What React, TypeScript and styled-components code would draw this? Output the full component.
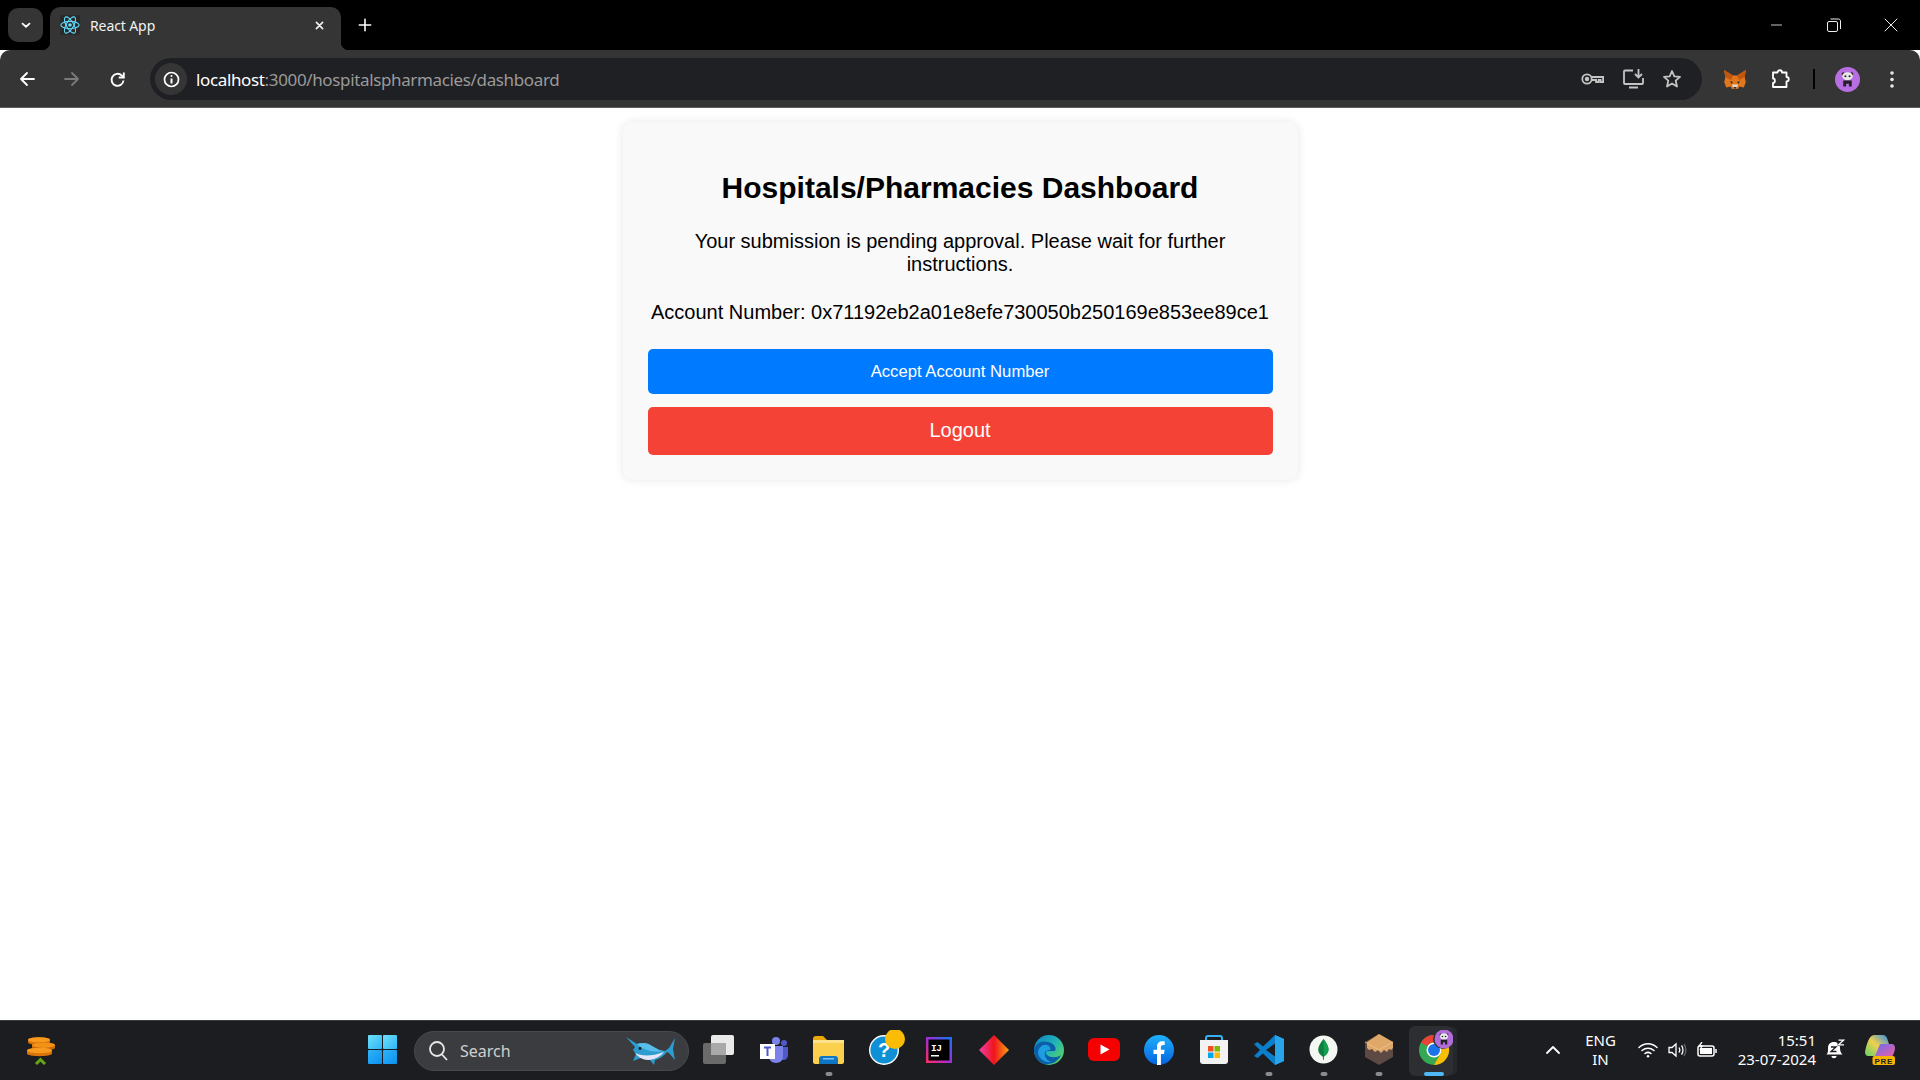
import React from "react";
import styled, { createGlobalStyle } from "styled-components";

const Global = createGlobalStyle`
  html, body { margin: 0; padding: 0; height: 100%; background: #fff; }
  #root { height: 100%; }
  * { box-sizing: border-box; }
`;

const Screen = styled.div`
  display: flex; flex-direction: column; width: 100%; height: 100vh; overflow: hidden;
  font-family: "Liberation Sans", Arial, sans-serif;
`;
const TabStrip = styled.div`
  display: flex; align-items: flex-end; height: 50px; flex: none; background: #000; padding-left: 8px;
`;
const TabMenu = styled.div`
  width: 35px; height: 34px; margin-bottom: 8px; margin-right: 7px; border-radius: 10px; background: #353535;
  display: flex; align-items: center; justify-content: center;
`;
const Tab = styled.div`
  position: relative; display: flex; align-items: center; width: 291px; height: 43px; background: #353535;
  border-radius: 10px 10px 0 0; padding: 0 16px 7px 10px; color: #fff;
  &::before, &::after { content: ""; position: absolute; bottom: 0; width: 8px; height: 8px; }
  &::before { left: -8px; background: radial-gradient(circle at 0 0, #000 8px, #353535 8.5px); }
  &::after { right: -8px; background: radial-gradient(circle at 100% 0, #000 8px, #353535 8.5px); }
`;
const Favicon = styled.div`
  width: 20px; height: 20px; background: #2a2a2a; border-radius: 2px; margin-right: 10px; flex: none;
  display: flex; align-items: center; justify-content: center;
`;
const TabTitle = styled.span`
  flex: 1; font: 14px "Noto Sans", sans-serif; color: #f1f1f1; letter-spacing: -0.1px;
`;
const NewTab = styled.div`
  width: 30px; height: 30px; margin: 0 0 10px 9px; display: flex; align-items: center; justify-content: center;
`;
const StripSpacer = styled.div`flex: 1;`;
const WindowControls = styled.div`
  display: flex; align-self: stretch; align-items: center; padding: 0 1px 0 0; margin-bottom: 1px;
`;
const WindowButton = styled.div`
  width: 56.5px; height: 48px; display: flex; align-items: center; justify-content: center;
`;

const Toolbar = styled.div`
  display: flex; align-items: center; height: 58px; flex: none; background: #353535; border-bottom: 1px solid #5c5c5c;
  border-radius: 10px 10px 0 0; padding: 1px 6px 0 4px;
`;
const ToolSlot = styled.div<{ $w: number }>`
  width: ${(p) => p.$w}px; height: 40px; flex: none; display: flex; align-items: center; justify-content: center;
`;
const AddressBar = styled.div`
  flex: 1; height: 42px; margin: 0 10px 0 10px; background: #1f2023; border-radius: 21px; display: flex; align-items: center;
  padding: 0 4px 0 5px;
`;
const InfoChip = styled.div`
  width: 32px; height: 32px; border-radius: 50%; background: #353535; display: flex; align-items: center; justify-content: center; margin-right: 9px;
`;
const Url = styled.div`
  flex: 1; font: 17px "Noto Sans", sans-serif; color: #9a9a9a; letter-spacing: -0.36px;
  b { font-weight: 400; color: #fff; }
`;
const ToolDivider = styled.div`
  width: 2px; height: 20px; background: #000; margin: 0 9px 0 9px; flex: none;
`;
const Avatar = styled.div`
  width: 25px; height: 25px; border-radius: 50%; background: #b76ee0; display: flex; align-items: center; justify-content: center;
`;

const Main = styled.main`
  flex: 1; min-height: 0; background: #fff; padding-top: 14px; display: flex; justify-content: center; align-items: flex-start;
`;
const Card = styled.section`
  width: 675px; padding: 25px; background: #f9f9f9; border-radius: 10px; box-shadow: 0 0 10px rgba(0, 0, 0, 0.1);
  text-align: center; color: #000;
`;
const Title = styled.h2`
  margin: 22px 0 24px; font-size: 30px; line-height: 37px; font-weight: 700;
`;
const Message = styled.p`
  margin: 0 0 25px; font-size: 20px; line-height: 23px;
`;
const ActionButton = styled.button<{ $bg: string; $size: number; $h: number; $lift?: number }>`
  display: block; width: 100%; height: ${(p) => p.$h}px; border: 0; border-radius: 5px; background: ${(p) => p.$bg}; color: #fff;
  font-family: "Liberation Sans", Arial, sans-serif; font-size: ${(p) => p.$size}px; margin-bottom: 13px;
  padding: 0 0 ${(p) => p.$lift ?? 0}px;
  &:last-child { margin-bottom: 0; }
`;

const Taskbar = styled.footer`
  display: grid; grid-template-columns: 355px auto 1fr; align-items: center; height: 60px; flex: none;
  background: #1c1d20; border-top: 1px solid #38393c;
`;
const WidgetArea = styled.div`padding-left: 27px; display: flex; align-items: center;`;
const TaskIcons = styled.div`display: flex; align-items: center;`;
const TaskSlot = styled.div<{ $running?: boolean; $active?: boolean }>`
  position: relative; width: 55px; height: 50px; display: flex; align-items: center; justify-content: center;
  padding-bottom: 2px;
  ${(p) => p.$active && `
    background: #2d2e31; border-radius: 6px; width: 44px; margin: 0 8px 0 3px;
    box-shadow: 5px 0 0 -1px #26272a;
  `}
  ${(p) => (p.$running || p.$active) && `
    &::after {
      content: ""; position: absolute; left: ${p.$active ? "calc(50% + 3px)" : "50%"}; bottom: 0; transform: translateX(-50%);
      width: ${p.$active ? 20 : 7}px; height: 3.5px; border-radius: 2px; background: ${p.$active ? "#4fb8f4" : "#8b8b8b"};
    }
  `}
`;
const SearchBox = styled.div`
  width: 275px; height: 40px; margin: 0 2px 0 4px; border-radius: 20px; background: #3b3c3f; border: 1px solid #48494c;
  display: flex; align-items: center; padding: 0 12px 0 13px; color: #cfcfcf; font: 16px "Noto Sans", sans-serif;
`;
const SearchLabel = styled.span`flex: 1; margin-left: 12px;`;
const Tray = styled.div`
  display: flex; align-items: center; justify-content: flex-end; padding: 0 17.5px 2px 0; color: #fff; font: 15px/19px "Noto Sans", sans-serif;
`;
const TraySlot = styled.div<{ $w: number }>`
  width: ${(p) => p.$w}px; flex: none; display: flex; align-items: center; justify-content: center;
`;
const CopilotSlot = styled(TraySlot)`margin-left: 11.5px;`;
const Lang = styled.div`text-align: center; width: 46px; margin: 0 9px 0 10px;`;
const Clock = styled.div`text-align: right; width: 90px; margin: 0 8px 0 4.5px; white-space: nowrap;`;

const Atom = () => (
  <svg width="20" height="20" viewBox="0 0 24 24" fill="none" stroke="#61dafb" strokeWidth="1.300">
    <ellipse cx="12" cy="12" rx="11" ry="4.400" />
    <ellipse cx="12" cy="12" rx="11" ry="4.400" transform="rotate(60 12 12)" />
    <ellipse cx="12" cy="12" rx="11" ry="4.400" transform="rotate(120 12 12)" />
    <circle cx="12" cy="12" r="2.200" fill="#61dafb" stroke="none" />
  </svg>
);
const Line = ({ d, w = 16, h = 16, vb = 16, c = "#fff", sw = 2 }: { d: string; w?: number; h?: number; vb?: number; c?: string; sw?: number }) => (
  <svg width={w} height={h} viewBox={`0 0 ${vb} ${vb}`} fill="none" stroke={c} strokeWidth={sw} strokeLinecap="round" strokeLinejoin="round">
    <path d={d} />
  </svg>
);
const FoxIcon = () => (
  <svg width="22" height="21" viewBox="0 0 22 21">
    <path d="M0 1 9 6.500h4L22 1l-1.400 7 1.200 5-2 5.500-4.500-1-1.300 2.500H8l-1.300-2.500-4.500 1-2-5.500 1.200-5z" fill="#e2761b" />
    <path d="M0 1 9 6.500 7 11 1.400 8zM22 1 13 6.500 15 11l5.600-3z" fill="#c1560f" />
    <path d="M6 12l3 1-1.500 2zM16 12l-3 1 1.500 2z" fill="#23343f" />
    <path d="M8 15.500h6L13 18.500H9z" fill="#e9d5c5" />
    <path d="M9.700 18h2.600v1.500H9.700z" fill="#23343f" />
  </svg>
);
const Panda = ({ s = 17 }: { s?: number }) => (
  <svg width={s} height={s} viewBox="0 0 18 18">
    <circle cx="4.500" cy="3" r="1.600" fill="#222" />
    <circle cx="13.500" cy="3" r="1.600" fill="#222" />
    <ellipse cx="9" cy="5.500" rx="5.500" ry="4.300" fill="#e8e8e8" />
    <circle cx="6.800" cy="5.500" r="1.100" fill="#222" />
    <circle cx="11.200" cy="5.500" r="1.100" fill="#222" />
    <path d="M4.500 10h9v6.500h-3v-3h-3v3h-3z" fill="#222" />
  </svg>
);

const Coins = () => (
  <svg width="28" height="28" viewBox="0 0 28 28">
    <path d="M1 2.800c0-3.500 22-3.500 22 0v2.400c0 3.500-22 3.500-22 0z" fill="#d9730a" />
    <ellipse cx="12" cy="2.800" rx="11" ry="2.600" fill="#f79a1e" />
    <path d="M5 8.200c0-3.500 23-3.500 23 0v2.600c0 3.500-23 3.500-23 0z" fill="#c9680a" />
    <ellipse cx="16.500" cy="8.200" rx="11.500" ry="2.700" fill="#f39217" />
    <path d="M0 13.500c0-3.500 25-3.500 25 0v3c0 3.500-25 3.500-25 0z" fill="#d9730a" />
    <ellipse cx="12.500" cy="13.500" rx="12.500" ry="2.800" fill="#f79a1e" />
    <path d="M9 27l4.500-4.500L18 27" fill="none" stroke="#64a811" strokeWidth="3" />
  </svg>
);
const WinLogo = () => (
  <svg width="29" height="29" viewBox="0 0 29 29">
    <defs>
      <linearGradient id="w1" x1="0" y1="0" x2="1" y2="1"><stop offset="0" stopColor="#6fe0fc" /><stop offset="1" stopColor="#2cb5f6" /></linearGradient>
      <linearGradient id="w2" x1="0" y1="0" x2="1" y2="1"><stop offset="0" stopColor="#2fb4f7" /><stop offset="1" stopColor="#0c8ff0" /></linearGradient>
    </defs>
    <rect x="0" y="0" width="14" height="14" rx="1" fill="url(#w1)" />
    <rect x="15" y="0" width="14" height="14" rx="1" fill="url(#w1)" />
    <rect x="0" y="15" width="14" height="14" rx="1" fill="url(#w2)" />
    <rect x="15" y="15" width="14" height="14" rx="1" fill="url(#w2)" />
  </svg>
);
const Dolphin = () => (
  <svg width="50" height="30" viewBox="0 0 50 30">
    <path d="M0 1l11 7c6-2 11-1 15 2 5 3 9 5 13 5l4-3 6-10-2 11 2 11-6-7-2-1c-3 4-8 7-12 8l-1 5-4-5c-3 0-6-1-9-2l-8 3 3-7-3-4 2-3z" fill="#2d9ccf" />
    <path d="M11 8c6-2 11-1 15 2 5 3 9 5 13 5-5 1-13 1-18-1-4-1-7-3-10-6z" fill="#58bde8" />
    <path d="M9 17c6 3 16 4 29-1-3 4-9 8-16 8-5 0-10-3-13-7z" fill="#e4e6f7" />
    <circle cx="14" cy="12.500" r="1.400" fill="#0d1c27" />
  </svg>
);
const TaskView = () => (
  <svg width="31" height="30" viewBox="0 0 31 30">
    <rect x="8" y="0" width="23" height="20" rx="2" fill="#e9e9e9" />
    <rect x="0" y="8" width="23" height="21" rx="2" fill="#6a6a6a" />
    <rect x="8" y="8" width="15" height="12" fill="#a9a9a9" />
  </svg>
);
const Teams = () => (
  <svg width="28" height="26" viewBox="0 0 28 26">
    <circle cx="24" cy="6" r="3" fill="#5059c9" />
    <path d="M18 10h10v8c0 3-2 5-5 5-2 0-4-1-5-2z" fill="#5059c9" />
    <circle cx="16" cy="4" r="4" fill="#7b83eb" />
    <path d="M9 9h14v11c0 3-3 6-7 6-4 0-7-3-7-6z" fill="#7b83eb" />
    <rect x="0" y="7" width="15" height="15" fill="#fff" />
    <path d="M4 10.500h7M7.500 10.500V19" stroke="#5059c9" strokeWidth="2" fill="none" />
  </svg>
);
const Folder = () => (
  <svg width="31" height="28" viewBox="0 0 31 28">
    <path d="M0 3c0-2 1-3 3-3h7l4 4h-14z" fill="#e8a70a" />
    <path d="M0 4h29c1 0 2 1 2 2v20c0 1-1 2-2 2H2c-1 0-2-1-2-2z" fill="#fbd04e" />
    <path d="M0 4h31v3H0z" fill="#fce28b" />
    <path d="M6 28v-5c0-2 1-3 3-3h13c2 0 3 1 3 3v5z" fill="#0f76c6" />
    <rect x="10" y="22" width="11" height="1.500" fill="#7fc3f5" />
  </svg>
);
const HelpBadge = () => (
  <svg width="44" height="40" viewBox="0 0 44 40">
    <circle cx="22" cy="20" r="14.300" fill="#0f8fd4" stroke="#fff" strokeWidth="1.400" />
    <text x="22" y="27" textAnchor="middle" fontFamily="Liberation Sans, sans-serif" fontWeight="700" fontSize="20" fill="#fff">?</text>
    <circle cx="33" cy="9" r="10" fill="#fbbc05" />
  </svg>
);
const IJ = () => (
  <svg width="26" height="26" viewBox="0 0 26 26">
    <defs>
      <linearGradient id="ij" x1="0" y1="1" x2="1" y2="0"><stop offset="0" stopColor="#fe315d" /><stop offset="0.500" stopColor="#a02dd6" /><stop offset="1" stopColor="#087cfa" /></linearGradient>
    </defs>
    <rect width="26" height="26" fill="url(#ij)" />
    <rect x="2.500" y="2.500" width="21" height="21" fill="#000" />
    <text x="5" y="13.500" fontFamily="Liberation Mono, monospace" fontWeight="700" fontSize="9.500" letterSpacing="-0.500" fill="#fff">IJ</text>
    <rect x="5" y="18" width="8" height="1.500" fill="#fff" />
  </svg>
);
const Diamond = () => (
  <svg width="30" height="30" viewBox="0 0 30 30">
    <defs>
      <linearGradient id="dm" x1="0" y1="0.500" x2="1" y2="0.500"><stop offset="0" stopColor="#f040a8" /><stop offset="0.500" stopColor="#f0141c" /><stop offset="1" stopColor="#f7a312" /></linearGradient>
    </defs>
    <path d="M15 0l15 15-15 15L0 15z" fill="url(#dm)" />
  </svg>
);
const Edge = () => (
  <svg width="30" height="30" viewBox="0 0 30 30">
    <defs>
      <linearGradient id="ed" x1="0" y1="0" x2="1" y2="0.800"><stop offset="0" stopColor="#0f7fcb" /><stop offset="0.550" stopColor="#20b5b5" /><stop offset="1" stopColor="#5fd45c" /></linearGradient>
    </defs>
    <circle cx="15" cy="15" r="15" fill="url(#ed)" />
    <path d="M0 15C1 8 8 5 14 7c6 1 9 6 7 9h-7c-2 0-3 2-1 4 3 3 10 3 14 0-3 7-10 10-17 9C4 27 0 21 0 15z" fill="#0b5fa8" />
    <path d="M4 17c1-5 5-8 9-7 3 1 4 3 3 5-4 0-6 2-5 6 1 3 3 5 6 6-7 1-13-4-13-10z" fill="#1d9ee0" />
  </svg>
);
const YouTube = () => (
  <svg width="32" height="23" viewBox="0 0 32 23">
    <rect width="32" height="23" rx="6" fill="#f60002" />
    <path d="M12.500 6.500l9 5-9 5z" fill="#fff" />
  </svg>
);
const Facebook = () => (
  <svg width="30" height="30" viewBox="0 0 30 30">
    <defs><linearGradient id="fb" x1="0" y1="0" x2="0" y2="1"><stop offset="0" stopColor="#1fb1fb" /><stop offset="1" stopColor="#0463e0" /></linearGradient></defs>
    <circle cx="15" cy="15" r="15" fill="url(#fb)" />
    <path d="M13 30V19H9.500v-4.200H13v-3c0-3.600 2.100-5.500 5.300-5.500 1.200 0 2.400.200 2.400.200v3.600h-1.600c-1.700 0-2.200 1-2.200 2.100v2.600h3.700l-.6 4.200h-3.100v11z" fill="#fff" />
  </svg>
);
const Store = () => (
  <svg width="30" height="30" viewBox="0 0 30 30">
    <path d="M7 7V3c0-1 1-2 2-2h12c1 0 2 1 2 2v4" fill="none" stroke="#35b0f0" strokeWidth="2" />
    <path d="M1 5h28v21c0 2-1 3-3 3H4c-2 0-3-1-3-3z" fill="#f2f2f2" />
    <rect x="9" y="11" width="5.500" height="5.500" fill="#f25022" />
    <rect x="15.500" y="11" width="5.500" height="5.500" fill="#7fba00" />
    <rect x="9" y="17.500" width="5.500" height="5.500" fill="#00a4ef" />
    <rect x="15.500" y="17.500" width="5.500" height="5.500" fill="#ffb900" />
  </svg>
);
const VSCode = () => (
  <svg width="30" height="30" viewBox="0 0 30 30">
    <path d="M21 0l9 4v22l-9 4-12-11.500-5.500 4.500L0 21l6-6-6-6 3.500-2L9 11.500z" fill="#0b7fcb" />
    <path d="M21 0l9 4v22l-9 4z" fill="#28a5ea" />
    <path d="M21 8.500L12 15l9 6.500z" fill="#1c1d20" />
  </svg>
);
const Mongo = () => (
  <svg width="29" height="29" viewBox="0 0 29 29">
    <circle cx="14.500" cy="14.500" r="14" fill="#f5f7f2" />
    <path d="M14.500 4c3 4 5 7 5 10.500s-3 6-4.500 7l-.3 3.500h-.6l-.4-3.500c-1.700-1-4.500-3.500-4.500-7S11.500 8 14.500 4z" fill="#0f7f42" />
    <path d="M14.500 4c3 4 5 7 5 10.500s-3 6-4.500 7z" fill="#13a050" />
  </svg>
);
const BoxIcon = () => (
  <svg width="28" height="31" viewBox="0 0 28 31">
    <path d="M14 0l14 8v15l-14 8-14-8V8z" fill="#5e4a45" />
    <path d="M14 0l14 8v6l-2 2-2-1-2 3-3-2-3 3-3-3-3 2-3-3-3 1-2-2V8z" fill="#e0a868" />
    <path d="M0 8l14 8 14-8" fill="none" stroke="#efc48e" strokeWidth="0.800" />
  </svg>
);
const Chrome = () => (
  <svg width="44" height="40" viewBox="0 0 44 40">
    <g transform="translate(10 5)">
      <circle cx="15" cy="15" r="15" fill="#34a853" />
      <path d="M15 0a15 15 0 0 1 13 7.500H15a7.500 7.500 0 0 0-6.500 3.750L2 7.500A15 15 0 0 1 15 0z" fill="#ea4335" />
      <path d="M28 7.500A15 15 0 0 1 15 30l6.500-11.250A7.500 7.500 0 0 0 15 7.500z" fill="#fbbc05" />
      <circle cx="15" cy="15" r="7.500" fill="#fff" />
      <circle cx="15" cy="15" r="6" fill="#1a73e8" />
    </g>
    <circle cx="34" cy="9" r="10" fill="#2d2e31" />
    <circle cx="35" cy="9" r="9.500" fill="#b06cd8" />
    <g transform="translate(28.500 2.500) scale(.72)">
      <circle cx="4.500" cy="3" r="1.600" fill="#222" />
      <circle cx="13.500" cy="3" r="1.600" fill="#222" />
      <ellipse cx="9" cy="5.500" rx="5.500" ry="4.300" fill="#e8e8e8" />
      <circle cx="6.800" cy="5.500" r="1.100" fill="#222" />
      <circle cx="11.200" cy="5.500" r="1.100" fill="#222" />
      <path d="M4.500 10h9v6.500h-3v-3h-3v3h-3z" fill="#222" />
    </g>
  </svg>
);
const Copilot = () => (
  <svg width="30" height="30" viewBox="0 0 30 30">
    <defs>
      <linearGradient id="cpa" x1="0" y1="1" x2="1" y2="0"><stop offset="0" stopColor="#63d26a" /><stop offset="0.500" stopColor="#f0d04c" /><stop offset="1" stopColor="#2d8cf0" /></linearGradient>
      <linearGradient id="cpb" x1="0" y1="0" x2="1" y2="1"><stop offset="0" stopColor="#6c6cf0" /><stop offset="1" stopColor="#f060a0" /></linearGradient>
    </defs>
    <path d="M9 0h9c2 0 3 1 4 3l2 6H16l-4 12H3c-2 0-3-2-3-4 1-6 4-17 9-17z" fill="url(#cpa)" />
    <path d="M16 9h11c2 0 3 2 3 4 0 3-2 9-5 10H9l4-9c1-3 2-5 3-5z" fill="url(#cpb)" />
    <rect x="7.500" y="21" width="22.500" height="9" rx="2" fill="#f8b400" />
    <text x="18.700" y="28.500" textAnchor="middle" fontFamily="Liberation Sans, sans-serif" fontWeight="700" fontSize="8" letterSpacing="0.600" fill="#1c1d20">PRE</text>
  </svg>
);
const SnoozeBell = () => (
  <svg width="19" height="21" viewBox="0 0 19 21">
    <path d="M8 3c4 0 6 2.500 6 6 0 3 .8 5 2.500 6.500H.5C2.200 14 2 12 2 9c0-3.500 2-6 6-6z" fill="#fff" />
    <path d="M5.500 17h5c0 3-5 3-5 0z" fill="#fff" />
    <path d="M5 8h5l-5 4.500h5.500" fill="none" stroke="#1c1d20" strokeWidth="1.300" />
    <path d="M11.500 0h7.500v7h-7.500z" fill="#1c1d20" />
    <path d="M12.500 1.200h5l-5 4.600h5.500" fill="none" stroke="#fff" strokeWidth="1.300" />
  </svg>
);

export default function App() {
  return (
    <Screen>
      <Global />
      <TabStrip>
        <TabMenu><Line d="M4 6.500l4 3.500 4-3.500" w={14} h={14} /></TabMenu>
        <Tab>
          <Favicon><Atom /></Favicon>
          <TabTitle>React App</TabTitle>
          <Line d="M3.500 3.500l9 9M12.500 3.500l-9 9" w={11} h={11} sw={2.400} c="#f1f1f1" />
        </Tab>
        <NewTab><Line d="M8 1.500v13M1.500 8h13" w={14} h={14} sw={1.800} /></NewTab>
        <StripSpacer />
        <WindowControls>
          <WindowButton><Line d="M0 8h13" w={13} h={16} c="#f2f2f2" sw={1} vb={16} /></WindowButton>
          <WindowButton>
            <svg width="14" height="14" viewBox="0 0 14 14" fill="none" stroke="#eee">
              <rect x=".5" y="3.500" width="10" height="10" rx="1.500" />
              <path d="M3.500 1h8c1 0 2 1 2 2v8" />
            </svg>
          </WindowButton>
          <WindowButton><Line d="M1 1l12 12M13 1L1 13" w={14} h={14} vb={14} c="#eee" sw={1} /></WindowButton>
        </WindowControls>
      </TabStrip>
      <Toolbar>
        <ToolSlot $w={45}><Line d="M15 8H2M8 2L2 8l6 6" w={16} h={16} sw={1.800} /></ToolSlot>
        <ToolSlot $w={46}><Line d="M1 8h13M8 2l6 6-6 6" w={16} h={16} c="#7a7a7a" sw={1.800} /></ToolSlot>
        <ToolSlot $w={45}>
          <svg width="17" height="17" viewBox="0 0 17 17" fill="none" stroke="#fff" strokeWidth="1.900">
            <path d="M14.500 9.500a6 6 0 1 1-1.800-5L14.500 6" />
            <path d="M14.800 1.500v5h-5" />
          </svg>
        </ToolSlot>
        <AddressBar>
          <InfoChip>
            <svg width="17" height="17" viewBox="0 0 17 17" fill="none" stroke="#fff" strokeWidth="1.700">
              <circle cx="8.500" cy="8.500" r="7" />
              <path d="M8.500 7.500v5" strokeWidth="2" />
              <circle cx="8.500" cy="5" r="1" fill="#fff" stroke="none" />
            </svg>
          </InfoChip>
          <Url><b>localhost</b>:3000/hospitalspharmacies/dashboard</Url>
          <ToolSlot $w={41}>
            <svg width="23" height="14" viewBox="0 0 23 14" fill="none" stroke="#c4c4c4" strokeWidth="1.800">
              <circle cx="6" cy="7" r="4.700" />
              <circle cx="6" cy="7" r="1.300" fill="#c4c4c4" />
              <path d="M10.700 5h11.400v5h-2.500V8h-2v2h-2.500V8h-4.400" />
            </svg>
          </ToolSlot>
          <ToolSlot $w={40}>
            <svg width="21" height="20" viewBox="0 0 21 20" fill="none" stroke="#c4c4c4" strokeWidth="1.800">
              <path d="M10 1.500H2c-.6 0-1 .4-1 1v11.500c0 .6.400 1 1 1h17c.6 0 1-.4 1-1V9" />
              <path d="M6 18.500h9" strokeWidth="2" />
              <path d="M15.500 0v8M12 5l3.500 3.500L19 5" />
            </svg>
          </ToolSlot>
          <ToolSlot $w={38}>
            <svg width="20" height="20" viewBox="0 0 20 20" fill="none" stroke="#c4c4c4" strokeWidth="1.800" strokeLinejoin="round">
              <path d="M10 2l2.300 5.400 5.700.5-4.300 3.800 1.300 5.800L10 14.500l-5 3 1.300-5.800L2 7.900l5.700-.5z" />
            </svg>
          </ToolSlot>
          <ToolSlot $w={7} />
        </AddressBar>
        <ToolSlot $w={46}><FoxIcon /></ToolSlot>
        <ToolSlot $w={46}>
          <svg width="19" height="20" viewBox="0 0 19 20" fill="none" stroke="#fff" strokeWidth="1.800" strokeLinejoin="round">
            <path d="M1 3.500h4.500c0-3 4.500-3 4.500 0h4.500v4.500c3 0 3 4.500 0 4.500v5.500H1v-4c2.500 0 2.500-4.500 0-4.500z" />
          </svg>
        </ToolSlot>
        <ToolDivider />
        <ToolSlot $w={46}><Avatar><Panda /></Avatar></ToolSlot>
        <ToolSlot $w={44}>
          <svg width="4" height="17" viewBox="0 0 4 17" fill="#e8e8e8">
            <circle cx="2" cy="2" r="1.800" /><circle cx="2" cy="8.500" r="1.800" /><circle cx="2" cy="15" r="1.800" />
          </svg>
        </ToolSlot>
      </Toolbar>
      <Main>
        <Card>
          <Title>Hospitals/Pharmacies Dashboard</Title>
          <Message>Your submission is pending approval. Please wait for further instructions.</Message>
          <Message>Account Number: 0x71192eb2a01e8efe730050b250169e853ee89ce1</Message>
          <ActionButton $bg="#007bff" $size={16.670} $h={45}>Accept Account Number</ActionButton>
          <ActionButton $bg="#f44336" $size={20} $h={48} $lift={2}>Logout</ActionButton>
        </Card>
      </Main>
      <Taskbar>
        <WidgetArea><Coins /></WidgetArea>
        <TaskIcons>
          <TaskSlot><WinLogo /></TaskSlot>
          <SearchBox>
            <svg width="20" height="22" viewBox="0 0 20 22" fill="none" stroke="#e8e8e8" strokeWidth="1.800">
              <circle cx="9" cy="9" r="7" /><path d="M14 14.500l5 5.500" />
            </svg>
            <SearchLabel>Search</SearchLabel>
            <Dolphin />
          </SearchBox>
          <TaskSlot><TaskView /></TaskSlot>
          <TaskSlot><Teams /></TaskSlot>
          <TaskSlot $running><Folder /></TaskSlot>
          <TaskSlot><HelpBadge /></TaskSlot>
          <TaskSlot><IJ /></TaskSlot>
          <TaskSlot><Diamond /></TaskSlot>
          <TaskSlot><Edge /></TaskSlot>
          <TaskSlot><YouTube /></TaskSlot>
          <TaskSlot><Facebook /></TaskSlot>
          <TaskSlot><Store /></TaskSlot>
          <TaskSlot $running><VSCode /></TaskSlot>
          <TaskSlot $running><Mongo /></TaskSlot>
          <TaskSlot $running><BoxIcon /></TaskSlot>
          <TaskSlot $active><Chrome /></TaskSlot>
        </TaskIcons>
        <Tray>
          <TraySlot $w={30}><Line d="M2 11l6-6 6 6" w={16} h={16} sw={1.800} /></TraySlot>
          <Lang>ENG<br />IN</Lang>
          <TraySlot $w={30}>
            <svg width="20" height="16" viewBox="0 0 20 16" fill="none" stroke="#fff" strokeWidth="1.500" strokeLinecap="round">
              <path d="M1 5.500c5-5 13-5 18 0M4 8.500c3.500-3 8.500-3 12 0M7 11.500c2-1.500 4-1.500 6 0" />
              <circle cx="10" cy="14.300" r="1.200" fill="#fff" stroke="none" />
            </svg>
          </TraySlot>
          <TraySlot $w={30}>
            <svg width="20" height="16" viewBox="0 0 20 16" fill="none" stroke="#fff" strokeWidth="1.300">
              <path d="M1 5.500h3l4-3.500v12l-4-3.500H1z" />
              <path d="M11 5.500c1 1.500 1 3.500 0 5M13.500 3.500c2 2.500 2 6.500 0 9" />
              <path d="M16 2c2.500 3.500 2.500 8.500 0 12" stroke="#666" />
            </svg>
          </TraySlot>
          <TraySlot $w={29}>
            <svg width="20" height="16" viewBox="0 0 20 16" fill="none" stroke="#fff" strokeWidth="1.500">
              <rect x="1" y="4" width="16" height="10" rx="2" />
              <rect x="3" y="6" width="12" height="6" fill="#fff" stroke="none" />
              <path d="M19 7v4" />
              <path d="M5 0L2 4h3L3 8" strokeWidth="1.300" />
            </svg>
          </TraySlot>
          <Clock>15:51<br />23-07-2024</Clock>
          <TraySlot $w={22}><SnoozeBell /></TraySlot>
          <CopilotSlot $w={45}><Copilot /></CopilotSlot>
        </Tray>
      </Taskbar>
    </Screen>
  );
}
